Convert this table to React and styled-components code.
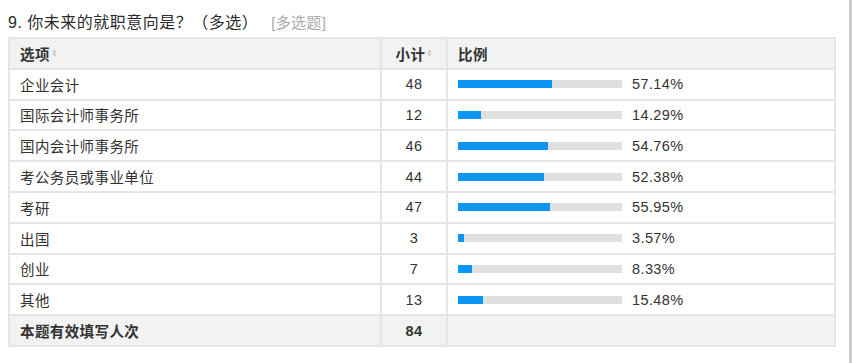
import React from "react";
import styled, { createGlobalStyle } from "styled-components";

const Global = createGlobalStyle`
  html, body { margin: 0; padding: 0; background: #fff; }
  body { font-family: "Liberation Sans", "Noto Sans CJK SC", sans-serif; color: #333; }
`;

const Page = styled.div`
  display: flex;
  height: 363px;
  overflow: hidden;
`;

const Main = styled.div`
  flex: 1;
  padding: 12px 0 0 8px;
`;

const Edge = styled.div`
  width: 3px;
  background: #cdcdcd;
`;

const Title = styled.div`
  display: flex;
  align-items: center;
  height: 18px;
  margin-bottom: 7px;
  font-size: 16px;
  letter-spacing: 0.5px;
  color: #2b2b2b;
`;

const Tag = styled.span`
  margin-left: 13px;
  font-size: 15px;
  letter-spacing: 0.3px;
  color: #aaa;
`;

const Table = styled.table`
  width: 826px;
  border-collapse: collapse;
  table-layout: fixed;
  font-size: 14.5px;
  letter-spacing: 0.4px;
`;

const Row = styled.tr`
  height: 30.8px;
  background: ${(p) => (p.$shaded ? "#f2f2f2" : "#fff")};
`;

const Cell = styled.td`
  border: 2px solid #e6e6e6;
  padding: 0 0 0 ${(p) => (p.$center ? 0 : 10)}px;
  text-align: ${(p) => (p.$center ? "center" : "left")};
  font-weight: ${(p) => (p.$bold ? 700 : 400)};
  vertical-align: middle;
  white-space: nowrap;
  color: #333;
`;

const HeadLabel = styled.span`
  display: inline-flex;
  align-items: center;
  gap: 2px;
`;

const BarWrap = styled.div`
  display: flex;
  align-items: center;
  gap: 10px;
`;

const Track = styled.div`
  width: 164px;
  height: 8px;
  background: #e0e0e0;
  display: flex;
`;

const Fill = styled.div`
  height: 100%;
  background: #0b96f5;
`;

const SortIcon = () => (
  <svg width="5" height="8" viewBox="0 0 5 8" style={{ display: "block" }}>
    <path d="M2.5 0.5 L4.7 3.4 L0.3 3.4 Z" fill="#c4c4c4" />
    <path d="M2.5 7.5 L4.7 4.6 L0.3 4.6 Z" fill="#c4c4c4" />
  </svg>
);

const data = [
  ["企业会计", 48, 57.14],
  ["国际会计师事务所", 12, 14.29],
  ["国内会计师事务所", 46, 54.76],
  ["考公务员或事业单位", 44, 52.38],
  ["考研", 47, 55.95],
  ["出国", 3, 3.57],
  ["创业", 7, 8.33],
  ["其他", 13, 15.48],
];

export default function App() {
  return (
    <>
      <Global />
      <Page>
        <Main>
          <Title>
            9. 你未来的就职意向是？（多选）
            <Tag>[多选题]</Tag>
          </Title>
          <Table>
            <colgroup>
              <col style={{ width: 372 }} />
              <col style={{ width: 66 }} />
              <col style={{ width: 388 }} />
            </colgroup>
            <tbody>
              <Row $shaded>
                <Cell $bold>
                  <HeadLabel>
                    选项<SortIcon />
                  </HeadLabel>
                </Cell>
                <Cell $bold $center>
                  <HeadLabel>
                    小计<SortIcon />
                  </HeadLabel>
                </Cell>
                <Cell $bold>比例</Cell>
              </Row>
              {data.map(([label, n, pct]) => (
                <Row key={label}>
                  <Cell>{label}</Cell>
                  <Cell $center>{n}</Cell>
                  <Cell>
                    <BarWrap>
                      <Track>
                        <Fill style={{ width: `${pct}%` }} />
                      </Track>
                      <span>{pct.toFixed(2)}%</span>
                    </BarWrap>
                  </Cell>
                </Row>
              ))}
              <Row $shaded>
                <Cell $bold>本题有效填写人次</Cell>
                <Cell $bold $center>84</Cell>
                <Cell />
              </Row>
            </tbody>
          </Table>
        </Main>
        <Edge />
      </Page>
    </>
  );
}
